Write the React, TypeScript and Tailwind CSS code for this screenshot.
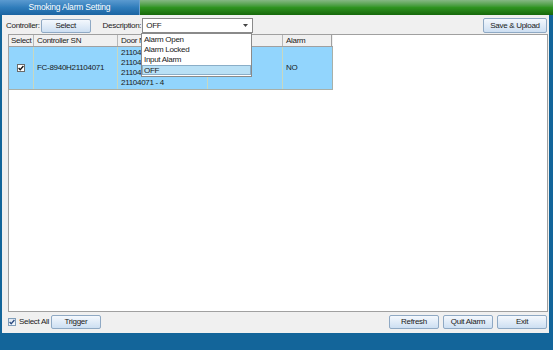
import { useState } from 'react'

const font = { fontFamily: '"Liberation Sans", Arial, sans-serif' }

const btn =
  'h-[14px] flex items-center justify-center rounded-[2px] border border-[#8fa9c4] bg-gradient-to-b from-[#f4f8fd] to-[#cddff2] text-[8px] text-[#1a1a1a] tracking-[-0.3px]'

const options = ['Alarm Open', 'Alarm Locked', 'Input Alarm', 'OFF']

function Check({ on, onClick, tint }: { on: boolean; onClick: () => void; tint?: boolean }) {
  return (
    <div
      onClick={onClick}
      className={`w-[8px] h-[8px] border flex items-center justify-center ${
        tint ? 'border-[#7f9db9] bg-gradient-to-b from-[#dfe8f4] to-[#f6f9fc]' : 'border-[#6a6a6a] bg-white'
      }`}
    >
      {on && (
        <svg width="6" height="6" viewBox="0 0 6 6">
          <path d="M0.6 3l1.6 1.7L5.4 1" fill="none" stroke={tint ? '#2a4a80' : '#111'} strokeWidth="1.3" />
        </svg>
      )}
    </div>
  )
}

export default function App() {
  const [checked, setChecked] = useState(true)
  const [selectAll, setSelectAll] = useState(true)

  return (
    <div style={font} className="w-[553px] h-[350px] flex flex-col bg-[#13659a] overflow-hidden">
      {/* Title bar */}
      <div className="h-[15px] flex shrink-0">
        <div className="w-[139px] flex items-center justify-center bg-gradient-to-b from-[#5a9ad0] via-[#2f7dbb] to-[#1b64a2] text-white text-[8.5px] tracking-[-0.2px]">
          Smoking Alarm Setting
        </div>
        <div className="flex-1 bg-gradient-to-b from-[#86b884] via-[#2f9420] to-[#16680a] border-l border-[#6aa0d0]" />
      </div>

      {/* Body */}
      <div className="flex-1 flex ml-[2px] mr-[4px] bg-[#f0f0f0] flex-col relative">
        {/* Toolbar */}
        <div className="h-[19px] flex items-center pl-[4px] pr-[2px] pt-[2px] text-[8px] text-[#1a1a1a] tracking-[-0.3px]">
          <span className="mr-[1px]">Controller:</span>
          <div className={`${btn} w-[50px]`}>Select</div>
          <span className="ml-[12px] mr-[1px]">Description:</span>
          <div className="w-[111px] h-[15px] bg-white border border-[#8a8a8a] flex items-center pl-[3px] relative">
            <span className="text-[8px]">OFF</span>
            <svg className="absolute right-[4px] top-[5px]" width="5" height="3" viewBox="0 0 5 3">
              <path d="M0 0h5L2.5 3z" fill="#444" />
            </svg>
          </div>
          <div className="flex-1" />
          <div className={`${btn} w-[64px] h-[15px]`}>Save &amp; Upload</div>
        </div>

        {/* Table area */}
        <div className="ml-[6px] mr-[1px] h-[278px] bg-white border border-[#a0a0a0] text-[8px] text-[#1a1a1a] tracking-[-0.3px]">
          <div className="w-[324px]">
            <div className="flex h-[12px] bg-[#f0f0f0] border-b border-[#a0a0a0]">
              <div className="w-[25px] border-r border-[#b8b8b8] flex items-center pl-[2px]">Select</div>
              <div className="w-[84px] border-r border-[#b8b8b8] flex items-center pl-[3px]">Controller SN</div>
              <div className="w-[90px] border-r border-[#b8b8b8] flex items-center pl-[3px]">Door Name</div>
              <div className="w-[75px] border-r border-[#b8b8b8] flex items-center pl-[3px]">Door</div>
              <div className="w-[49px] border-r border-[#a0a0a0] flex items-center pl-[3px]">Alarm</div>
            </div>
            <div className="flex h-[43px] bg-[#92d5fd] border-b border-r border-[#a8b0a8]">
              <div className="w-[25px] border-r border-[#c8d8c0] flex items-center justify-center">
                <Check on={checked} onClick={() => setChecked(!checked)} />
              </div>
              <div className="w-[84px] border-r border-[#c8d8c0] flex items-center pl-[3px]">FC-8940H21104071</div>
              <div className="w-[90px] border-r border-[#c8d8c0] flex flex-col justify-center pl-[3px] leading-[10px]">
                <span>21104071 - 1</span>
                <span>21104071 - 2</span>
                <span>21104071 - 3</span>
                <span>21104071 - 4</span>
              </div>
              <div className="w-[75px] border-r border-[#c8d8c0]" />
              <div className="w-[48px] flex items-center pl-[3px]">NO</div>
            </div>
          </div>
        </div>

        {/* Bottom bar */}
        <div className="flex items-center h-[16px] mt-[2px] pl-[6px] pr-[2px] text-[8px] text-[#1a1a1a] tracking-[-0.3px]">
          <div className="mr-[3px]">
            <Check on={selectAll} onClick={() => setSelectAll(!selectAll)} tint />
          </div>
          <span className="mr-[2px]">Select All</span>
          <div className={`${btn} w-[50px]`}>Trigger</div>
          <div className="flex-1" />
          <div className={`${btn} w-[50px]`}>Refresh</div>
          <div className={`${btn} w-[50px] ml-[4px]`}>Quit Alarm</div>
          <div className={`${btn} w-[50px] ml-[4px]`}>Exit</div>
        </div>

        {/* Dropdown list */}
        <div className="absolute left-[139px] top-[18px] w-[111px] bg-white border border-[#8a8a8a] text-[8px] text-[#1a1a1a] tracking-[-0.3px] py-[1px]">
          {options.map((o) => (
            <div
              key={o}
              className={
                o === 'OFF'
                  ? 'h-[10px] leading-[9px] pl-[1px] bg-[#b9e0f5] border border-[#8aaec8]'
                  : 'h-[10px] leading-[10px] pl-[2px]'
              }
            >
              {o}
            </div>
          ))}
        </div>
      </div>

      <div className="h-[17px] shrink-0" />
    </div>
  )
}
